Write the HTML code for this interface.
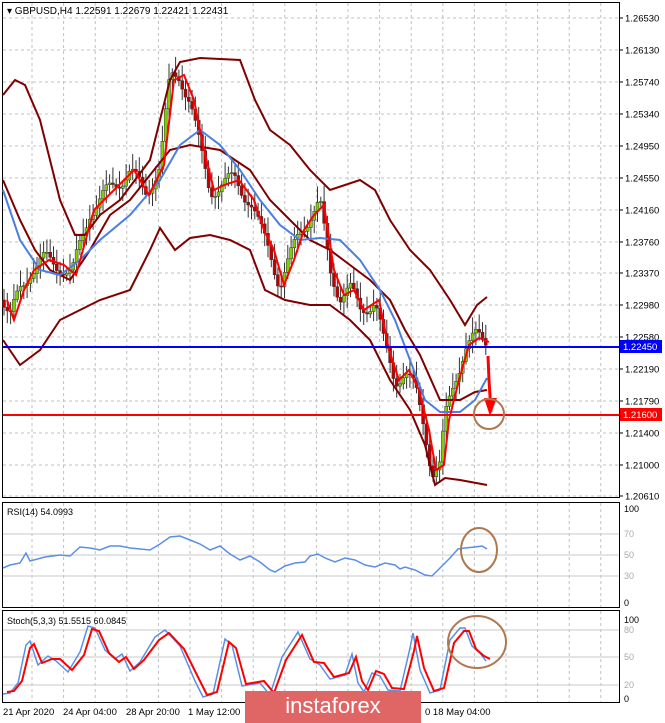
<!DOCTYPE html>
<html><head><meta charset="utf-8"><style>
body{margin:0;background:#fff;width:665px;height:723px;overflow:hidden;font-family:"Liberation Sans",sans-serif}
svg{position:absolute;left:0;top:0}
.wm{position:absolute;left:245px;top:691px;width:176px;height:32px;background:#e06666;color:#fff;font-size:22px;text-align:center;line-height:30px}
</style></head><body>
<svg id="s" width="665" height="723" xmlns="http://www.w3.org/2000/svg" font-family="Liberation Sans, sans-serif" font-size="10">
<g id="grid"></g>
<rect x="2.5" y="2.5" width="617" height="495" fill="none" stroke="#000"/>
<rect x="2.5" y="502.5" width="617" height="105" fill="none" stroke="#000"/>
<rect x="2.5" y="610.5" width="617" height="92" fill="none" stroke="#000"/>
<g id="lab" fill="#000"></g>
<g id="plot"></g>
<text x="7" y="14" font-size="10">▾ GBPUSD,H4  1.22591 1.22679 1.22421 1.22431</text>
<text x="7" y="515" font-size="9">RSI(14) 54.0993</text>
<text x="7" y="624" font-size="9">Stoch(5,3,3) 51.5515 60.0845</text>
</svg>
<div class="wm">instaforex</div>
<script>
var S=document.getElementById('s'),G=document.getElementById('grid'),L=document.getElementById('lab'),P=document.getElementById('plot');
function el(p,t,a){var e=document.createElementNS('http://www.w3.org/2000/svg',t);for(var k in a)e.setAttribute(k,a[k]);p.appendChild(e);return e}
var prices=[['1.26530',18],['1.26130',50],['1.25740',82],['1.25340',114],['1.24950',146],['1.24550',178],['1.24160',210],['1.23760',242],['1.23370',273],['1.22980',305],['1.22580',337],['1.22190',369],['1.21790',401],['1.21400',433],['1.21000',465],['1.20610',496]];
prices.forEach(function(p){el(G,'line',{x1:3,x2:619,y1:p[1],y2:p[1],stroke:'#c0c0c0','stroke-dasharray':'3,3'});el(L,'line',{x1:619,x2:623,y1:p[1],y2:p[1],stroke:'#000'});var t=el(L,'text',{x:625,y:p[1]+3.5,'font-size':9.5});t.textContent=p[0];});
for(var x=32;x<619;x+=31.6){[[3,497],[503,607],[611,702]].forEach(function(r){el(G,'line',{x1:x,x2:x,y1:r[0],y2:r[1],stroke:'#c0c0c0','stroke-dasharray':'3,3'})});}
[[534,'70'],[555,'50'],[576,'30']].forEach(function(a){el(G,'line',{x1:3,x2:619,y1:a[0],y2:a[0],stroke:'#c8c8c8'});var t=el(L,'text',{x:624,y:a[0]+3,'font-size':9,fill:'#aaa'});t.textContent=a[1];});
[[630,'80'],[657,'50'],[685,'20']].forEach(function(a){el(G,'line',{x1:3,x2:619,y1:a[0],y2:a[0],stroke:'#c8c8c8'});var t=el(L,'text',{x:624,y:a[0]+3,'font-size':9,fill:'#aaa'});t.textContent=a[1];});
[[509,'100'],[603,'0'],[620,'100'],[699,'0']].forEach(function(a){var t=el(L,'text',{x:624,y:a[0]+3,'font-size':9});t.textContent=a[1];});
[[3,'21 Apr 2020'],[63,'24 Apr 04:00'],[126,'28 Apr 20:00'],[188,'1 May 12:00'],[425,'0  18 May 04:00']].forEach(function(a){var t=el(L,'text',{x:a[0],y:715,'font-size':9.5});t.textContent=a[1];});
function pts(a){return a.map(function(p){return p.join(',')}).join(' ')}
function interp(a,x){for(var i=0;i<a.length-1;i++){if(x>=a[i][0]&&x<=a[i+1][0]){var f=(x-a[i][0])/(a[i+1][0]-a[i][0]);return a[i][1]+f*(a[i+1][1]-a[i][1]);}}return a[a.length-1][1]}
var price=[[3,300],[10,320],[20,290],[30,270],[45,260],[60,265],[72,275],[90,210],[100,200],[115,185],[130,170],[145,195],[160,165],[170,80],[180,75],[190,100],[200,150],[210,190],[220,185],[235,180],[250,200],[260,230],[270,250],[280,285],[290,260],[300,230],[310,215],[320,205],[330,270],[340,295],[350,290],[360,310],[375,300],[385,350],[395,380],[405,370],[415,390],[425,430],[432,470],[440,465],[445,420],[455,380],[465,345],[475,338],[485,342]];
var prev=interp(price,3);
for(var x=4;x<=486;x+=3.3){var c=interp(price,x)+Math.sin(x*1.7)*9;var o=prev;var hi=Math.min(o,c)-4-Math.abs(Math.sin(x*3.3))*12,lo=Math.max(o,c)+3+Math.abs(Math.cos(x*2.1))*10;
el(P,'line',{x1:x,x2:x,y1:hi,y2:lo,stroke:'#333','stroke-width':1});
var up=c<o;el(P,'rect',{x:x-1.5,y:Math.min(o,c),width:3,height:Math.max(1,Math.abs(o-c)),fill:up?'#7fd000':'#c00000',stroke:'#333','stroke-width':0.5});prev=c;}
var upper=[[3,95],[15,80],[25,85],[40,120],[60,200],[75,235],[85,235],[100,215],[120,200],[150,160],[170,80],[180,62],[200,58],[240,60],[255,100],[270,130],[290,145],[310,170],[330,190],[360,180],[375,190],[390,220],[410,250],[430,270],[450,300],[465,325],[477,305],[487,297]];
var mid=[[3,180],[20,220],[35,250],[50,270],[70,280],[90,250],[110,215],[130,200],[170,150],[190,145],[220,150],[250,170],[270,200],[290,220],[310,240],[330,250],[350,265],[370,280],[390,300],[405,330],[420,355],[440,400],[460,400],[475,392],[487,390]];
var lower=[[3,340],[20,365],[40,350],[60,320],[80,310],[100,300],[130,290],[150,250],[160,228],[175,250],[190,238],[210,235],[230,240],[250,250],[265,290],[285,300],[310,305],[330,305],[350,320],[370,340],[390,380],[410,410],[425,445],[435,485],[445,478],[460,480],[487,485]];
var blue=[[3,190],[20,240],[40,270],[60,275],[80,260],[100,240],[130,215],[160,180],[180,145],[200,130],[220,145],[240,170],[260,200],[280,225],[300,240],[320,238],[340,240],[360,260],[380,290],[395,320],[410,360],[425,400],[440,412],[460,412],[475,400],[487,378]];
[upper,mid,lower].forEach(function(a){el(P,'polyline',{points:pts(a),fill:'none',stroke:'#800000','stroke-width':2})});
el(P,'polyline',{points:pts(blue),fill:'none',stroke:'#4a7fe0','stroke-width':2});
var red=price.map(function(p){return [p[0]+4,p[1]]});
el(P,'polyline',{points:pts(red),fill:'none',stroke:'#ff0000','stroke-width':2});
el(P,'line',{x1:3,x2:619,y1:347,y2:347,stroke:'#0000ff','stroke-width':2});
el(P,'line',{x1:3,x2:619,y1:415,y2:415,stroke:'#ff0000','stroke-width':2});
el(P,'rect',{x:620,y:340,width:42,height:13,fill:'#0000ff'});
var t=el(P,'text',{x:623,y:350,fill:'#fff','font-size':9.5});t.textContent='1.22450';
el(P,'rect',{x:620,y:408,width:42,height:13,fill:'#ff0000'});
t=el(P,'text',{x:623,y:418,fill:'#fff','font-size':9.5});t.textContent='1.21600';
el(P,'polyline',{points:'488,356 489,380 491,412',fill:'none',stroke:'#ff0000','stroke-width':3});
el(P,'polygon',{points:'484,398 497,398 490,416',fill:'#ff0000'});
el(P,'circle',{cx:489,cy:414,r:15,fill:'none',stroke:'#b07850','stroke-width':2});
var rsi=[[3,568],[10,565],[20,563],[26,553],[30,561],[45,557],[60,555],[70,556],[80,547],[90,548],[100,550],[110,546],[120,546],[130,548],[140,549],[150,550],[160,544],[170,537],[180,536],[190,540],[200,544],[210,550],[220,546],[230,554],[240,560],[250,556],[260,562],[270,570],[275,572],[285,566],[295,563],[305,562],[310,556],[318,554],[325,558],[335,562],[345,558],[355,560],[365,565],[375,567],[385,563],[395,565],[400,569],[405,567],[415,570],[425,575],[432,576],[440,568],[450,558],[458,549],[465,548],[475,547],[482,546],[487,549]];
el(P,'polyline',{points:pts(rsi),fill:'none',stroke:'#5a8fe8','stroke-width':1.5});
el(P,'ellipse',{cx:479,cy:550,rx:18,ry:22,fill:'none',stroke:'#b07850','stroke-width':2});
var s1=[[3,694],[10,693],[18,683],[26,645],[30,641],[38,665],[48,656],[56,661],[68,672],[80,652],[88,626],[95,628],[105,650],[115,659],[122,654],[130,671],[140,662],[155,637],[165,630],[180,646],[195,681],[203,697],[213,694],[225,639],[232,645],[242,686],[260,683],[270,695],[282,657],[298,632],[310,659],[320,665],[330,679],[345,675],[352,654],[358,683],[364,692],[372,673],[380,676],[388,690],[400,691],[410,648],[413,633],[420,670],[430,693],[440,690],[450,640],[460,628],[465,628],[472,646],[480,653],[486,661]];
var s2=s1.map(function(p){return [p[0]+4,p[1]+(p[1]<660?3:-2)]});
el(P,'polyline',{points:pts(s1),fill:'none',stroke:'#5a8fe8','stroke-width':1.5});
el(P,'polyline',{points:pts(s2),fill:'none',stroke:'#ff0000','stroke-width':2});
el(P,'ellipse',{cx:477,cy:642,rx:29,ry:26,fill:'none',stroke:'#b07850','stroke-width':2});
</script>
</body></html>
